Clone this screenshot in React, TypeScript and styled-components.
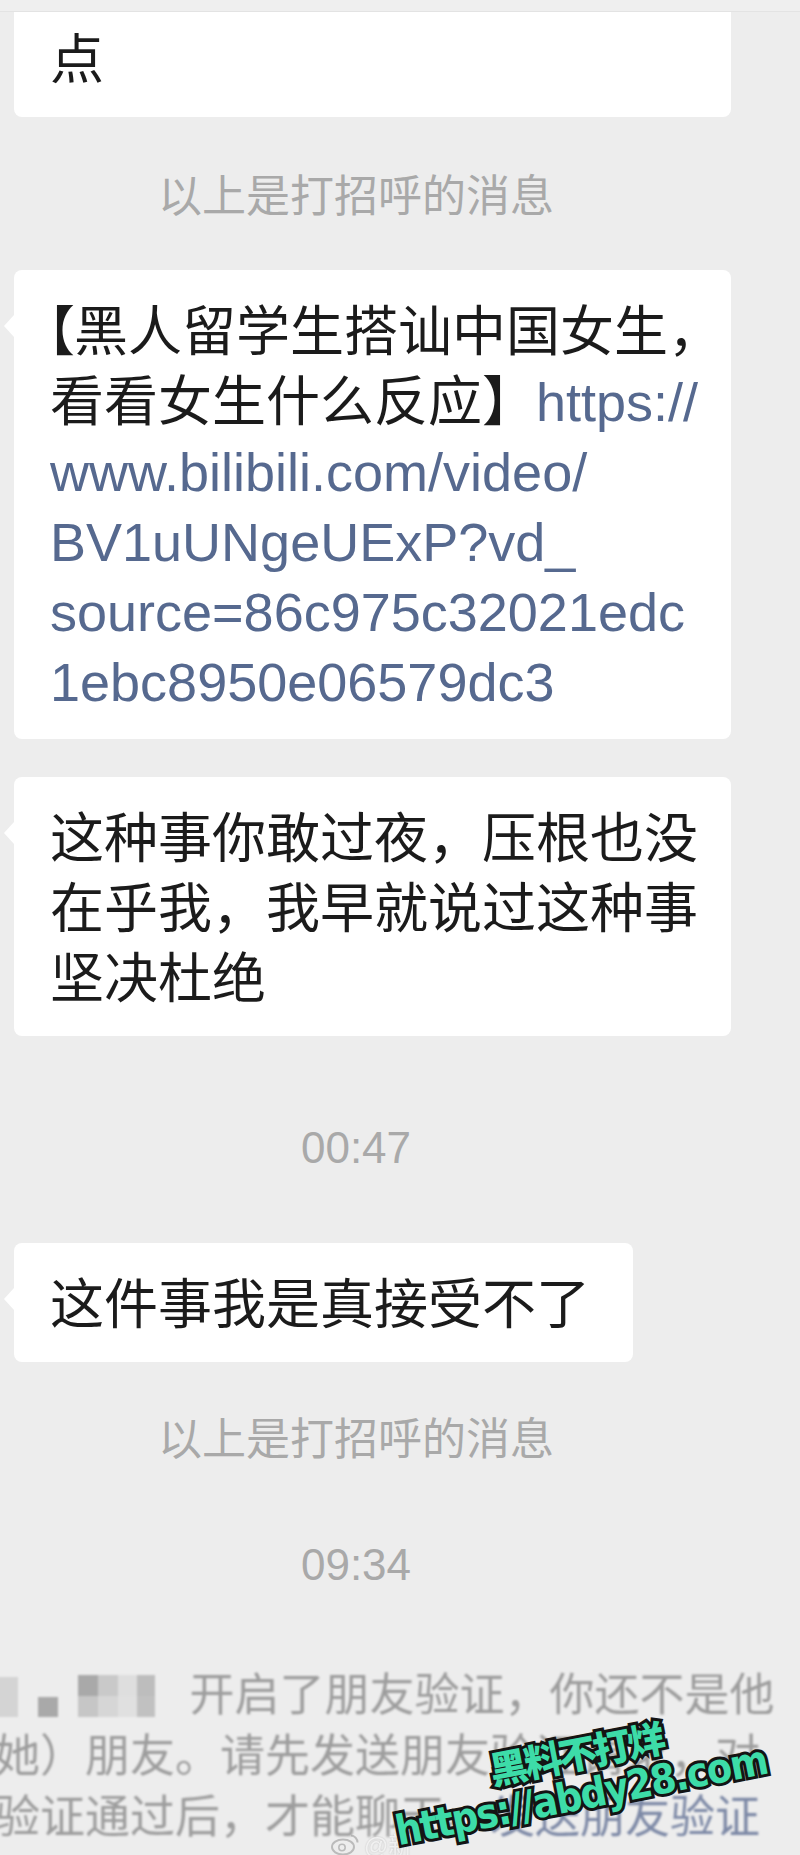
import styled, { createGlobalStyle } from "styled-components";

const GlobalStyle = createGlobalStyle`
  html, body {
    margin: 0;
    padding: 0;
    background: #ededed;
  }
  body {
    font-family: "Liberation Sans", "Noto Sans CJK SC", sans-serif;
  }
`;

const Screen = styled.div`
  position: relative;
  width: 800px;
  height: 1855px;
  overflow: hidden;
  background: #ededed;
`;

const TopStrip = styled.div`
  height: 12px;
  background: #efefef;
  border-bottom: 1px solid #e3e3e3;
  box-sizing: border-box;
`;

const ChatList = styled.div`
  display: flex;
  flex-direction: column;
  align-items: flex-start;
`;

const Bubble = styled.div<{ $width?: number; $cut?: boolean; $gap?: number }>`
  position: relative;
  box-sizing: border-box;
  width: ${(p) => (p.$width ? `${p.$width}px` : "auto")};
  margin: ${(p) => p.$gap ?? 0}px 0 0 14px;
  padding: ${(p) => (p.$cut ? "0" : "27px")} 43px 22px 36px;
  background: #ffffff;
  border-radius: ${(p) => (p.$cut ? "0 0 8px 8px" : "8px")};
  font-size: 54px;
  line-height: 70px;
  color: #1b1b1b;
  overflow: ${(p) => (p.$cut ? "hidden" : "visible")};

  &::before {
    content: "";
    display: ${(p) => (p.$cut ? "none" : "block")};
    position: absolute;
    left: -10px;
    top: 45px;
    border-style: solid;
    border-width: 11px 10px 11px 0;
    border-color: transparent #ffffff transparent transparent;
  }
`;

const HiddenLines = styled.div`
  margin-top: -60px;

  & > span:first-child {
    margin-bottom: 3px;
  }
`;

const Line = styled.span`
  display: block;
  white-space: nowrap;
`;

const OpenBracket = styled.span`
  margin-left: -29px;
  margin-right: -1px;
`;

const Link = styled.span`
  color: #56698f;
`;

const SysText = styled.div<{ $gap: number }>`
  align-self: stretch;
  margin-top: ${(p) => p.$gap}px;
  padding-right: 88px;
  text-align: center;
  font-size: 44px;
  line-height: 60px;
  color: #a9a9a9;
`;

const Notice = styled.div`
  width: 1000px;
  margin: 70px 0 0 -145px;
  text-align: center;
  font-size: 45px;
  line-height: 61px;
  color: #9d9d9d;
  filter: blur(0.9px);
`;

const NoticeLink = styled.span`
  color: #7d89a6;
`;

const NameMask = styled.span`
  display: inline-flex;
  align-items: flex-end;
  height: 44px;
  margin-right: 34px;
  vertical-align: -6px;
`;

const MaskBlock = styled.span<{ $w: number; $h: number; $c: string; $mr?: number }>`
  display: inline-block;
  width: ${(p) => p.$w}px;
  height: ${(p) => p.$h}px;
  background: ${(p) => p.$c};
  margin-right: ${(p) => p.$mr ?? 0}px;
`;

const Mosaic = styled.span`
  display: inline-grid;
  grid-template-columns: 20px 20px 19px 18px;
  grid-template-rows: 21px 21px;
`;

const Cell = styled.span<{ $c: string }>`
  background: ${(p) => p.$c};
`;

const Watermark = styled.div`
  position: absolute;
  left: 400px;
  top: 1772px;
  transform: rotate(-11deg);
  transform-origin: left bottom;
  display: flex;
  flex-direction: column;
  pointer-events: none;
`;

const MarkText = styled.span<{ $size: number; $indent: number; $ls: number }>`
  display: block;
  margin-left: ${(p) => p.$indent}px;
  white-space: nowrap;
  font-family: "DejaVu Sans Condensed", "DejaVu Sans", "Noto Sans CJK SC", sans-serif;
  font-weight: 900;
  font-size: ${(p) => p.$size}px;
  line-height: 1.02;
  letter-spacing: ${(p) => p.$ls}px;
  color: #3ddca8;
  -webkit-text-stroke: 6px #141414;
  paint-order: stroke fill;
`;

const WeiboMark = styled.div`
  position: absolute;
  left: 330px;
  top: 1826px;
  display: flex;
  align-items: center;
  gap: 4px;
  font-size: 24px;
  color: rgba(255, 255, 255, 0.75);
  text-shadow: 0 0 2px rgba(0, 0, 0, 0.25);
  opacity: 0.8;
`;

const WeiboIcon = () => (
  <svg width="30" height="24" viewBox="0 0 30 24">
    <ellipse cx="13" cy="15" rx="11" ry="7.5" fill="none" stroke="rgba(160,160,160,0.8)" strokeWidth="2" />
    <circle cx="12" cy="15.5" r="3.2" fill="none" stroke="rgba(160,160,160,0.8)" strokeWidth="1.6" />
    <path d="M21 3.5 A7 7 0 0 1 27.5 10.5" fill="none" stroke="rgba(160,160,160,0.8)" strokeWidth="2" />
  </svg>
);

export default function App() {
  return (
    <>
      <GlobalStyle />
      <Screen>
        <TopStrip />
        <ChatList>
          <Bubble $width={717} $cut>
            <HiddenLines>
              <Line>你说的我都知道，但是也早一</Line>
              <Line>点</Line>
            </HiddenLines>
          </Bubble>

          <SysText $gap={50}>以上是打招呼的消息</SysText>

          <Bubble $width={717} $gap={43}>
            <Line>
              <OpenBracket>【</OpenBracket>黑人留学生搭讪中国女生，
            </Line>
            <Line>
              看看女生什么反应】<Link>https://</Link>
            </Line>
            <Line>
              <Link>www.bilibili.com/video/</Link>
            </Line>
            <Line>
              <Link>BV1uUNgeUExP?vd_</Link>
            </Line>
            <Line>
              <Link>source=86c975c32021edc</Link>
            </Line>
            <Line>
              <Link>1ebc8950e06579dc3</Link>
            </Line>
          </Bubble>

          <Bubble $width={717} $gap={38}>
            <Line>这种事你敢过夜，压根也没</Line>
            <Line>在乎我，我早就说过这种事</Line>
            <Line>坚决杜绝</Line>
          </Bubble>

          <SysText $gap={82}>00:47</SysText>

          <Bubble $gap={65}>
            <Line>这件事我是真接受不了</Line>
          </Bubble>

          <SysText $gap={48}>以上是打招呼的消息</SysText>

          <SysText $gap={65}>09:34</SysText>

          <Notice>
            <Line>
              <NameMask>
                <MaskBlock $w={83} $h={40} $c="#d4d4d4" $mr={20} />
                <MaskBlock $w={20} $h={20} $c="#a9a9a9" $mr={20} />
                <Mosaic>
                  <Cell $c="#a9a9a9" />
                  <Cell $c="#c9c9c9" />
                  <Cell $c="#dedede" />
                  <Cell $c="#bdbdbd" />
                  <Cell $c="#c6c6c6" />
                  <Cell $c="#d6d6d6" />
                  <Cell $c="#e0e0e0" />
                  <Cell $c="#c1c1c1" />
                </Mosaic>
              </NameMask>
              开启了朋友验证，你还不是他
            </Line>
            <Line>（她）朋友。请先发送朋友验证请求，对</Line>
            <Line>
              方验证通过后，才能聊天。<NoticeLink>发送朋友验证</NoticeLink>
            </Line>
          </Notice>
        </ChatList>

        <WeiboMark>
          <WeiboIcon />
          <span>@新</span>
        </WeiboMark>

        <Watermark>
          <MarkText $size={38} $indent={104} $ls={-3}>黑料不打烊</MarkText>
          <MarkText $size={41} $indent={0} $ls={-1.5}>https://abdy28.com</MarkText>
        </Watermark>
      </Screen>
    </>
  );
}
